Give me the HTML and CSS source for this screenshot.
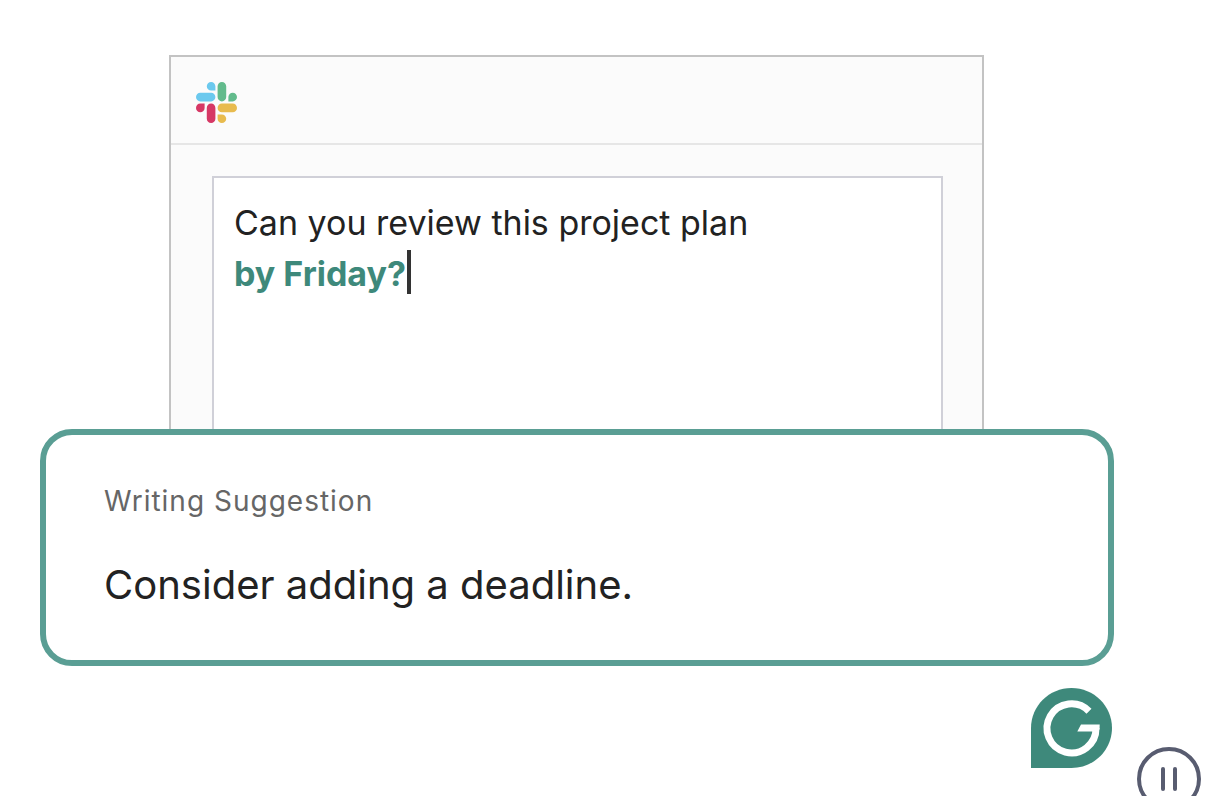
FILE: index.html
```
<!DOCTYPE html>
<html lang="en">
<head>
    <meta charset="utf-8">
    <meta name="viewport" content="width=device-width, initial-scale=1">
    <title>Writing Suggestion</title>
    <link rel="stylesheet" href="styles.css">
</head>

<body>
    <main class="demo">
        <section class="window">
            <header class="window-header">
                <svg class="slack-logo" viewBox="0 0 122.8 122.8" role="img" aria-label="Slack">
                    <path fill="#d63865" d="M25.8 77.6c0 7.1-5.8 12.9-12.9 12.9S0 84.7 0 77.6s5.8-12.9 12.9-12.9h12.9v12.9zm6.5 0c0-7.1 5.8-12.9 12.9-12.9s12.9 5.8 12.9 12.9v32.3c0 7.1-5.8 12.9-12.9 12.9s-12.9-5.8-12.9-12.9V77.6z"/>
                    <path fill="#6bc9ee" d="M45.2 25.8c-7.1 0-12.9-5.8-12.9-12.9S38.1 0 45.2 0s12.9 5.8 12.9 12.9v12.9H45.2zm0 6.5c7.1 0 12.9 5.8 12.9 12.9s-5.8 12.9-12.9 12.9H12.9C5.8 58.1 0 52.3 0 45.2s5.8-12.9 12.9-12.9h32.3z"/>
                    <path fill="#62bb8c" d="M97 45.2c0-7.1 5.8-12.9 12.9-12.9s12.9 5.8 12.9 12.9-5.8 12.9-12.9 12.9H97V45.2zm-6.5 0c0 7.1-5.8 12.9-12.9 12.9s-12.9-5.8-12.9-12.9V12.9C64.7 5.8 70.5 0 77.6 0s12.9 5.8 12.9 12.9v32.3z"/>
                    <path fill="#e8bb4e" d="M77.6 97c7.1 0 12.9 5.8 12.9 12.9s-5.8 12.9-12.9 12.9-12.9-5.8-12.9-12.9V97h12.9zm0-6.5c-7.1 0-12.9-5.8-12.9-12.9s5.8-12.9 12.9-12.9h32.3c7.1 0 12.9 5.8 12.9 12.9s-5.8 12.9-12.9 12.9H77.6z"/>
                </svg>
            </header>
            <div class="window-body">
                <p class="message">
                    Can you review this project plan<br>
                    <strong class="insertion">by Friday?</strong><span class="caret"></span>
                </p>
            </div>
        </section>

        <section class="suggestion">
            <h2 class="suggestion-label">Writing Suggestion</h2>
            <p class="suggestion-text">Consider adding a deadline.</p>
        </section>

        <svg class="grammarly-logo" viewBox="0 0 81 80" role="img" aria-label="Grammarly">
            <path fill="#3e897b" d="M40.5 0C63 0 81 18 81 40S63 80 40.5 80H0V40C0 18 18 0 40.5 0z"/>
            <path fill="none" stroke="#fff" stroke-width="7" d="M58 23.2A24.5 24.5 0 1 0 65 40"/>
            <path fill="#fff" d="M50 36.500h18.700l-.2 5-7 2H46.300z"/>
        </svg>
    </main>

    <button class="pause" type="button" aria-label="Pause animation">
        <span class="pause-bar"></span>
        <span class="pause-bar"></span>
    </button>
</body>

</html>
```
FILE: styles.css
```
* { box-sizing: border-box; }
body, html {
    margin: 0;
    padding: 0;
    background: #fff;
    color: #222;
    font-family: Inter, "Liberation Sans", sans-serif;
}
h2, p { margin: 0; }
.demo {
    display: flex;
    flex-direction: column;
    padding: 55px 112px 28px 40px;
}

/* Window */
.window {
    margin: 0 130px 0 129px;
    background: #fbfbfb;
    border: 2px solid #c3c3c3;
    border-bottom: 0;
}
.window-header {
    padding: 25px 25px 20px;
    border-bottom: 2px solid #e6e6e6;
}
.slack-logo { display: block; width: 41px; height: 41px; }
.window-body { padding: 31px 39px 0 41px; }
.message {
    min-height: 253px;
    padding: 19px 20px;
    background: #fff;
    border: 2px solid #d0d0d8;
    border-bottom: 0;
    font-size: 34px;
    line-height: 51px;
}
.insertion { color: #3e897b; font-weight: 700; }
.caret {
    display: inline-block;
    width: 4px; height: 44px;
    margin-left: 1px;
    background: #333;
    vertical-align: -8px;
}

/* Suggestion card */
.suggestion {
    padding: 46px 58px 45px;
    background: #fff;
    border: 6px solid #5a9e94;
    border-radius: 32px;
}
.suggestion-label {
    color: #666;
    font-size: 28px;
    font-weight: 400;
    letter-spacing: 1px;
    line-height: 40px;
}
.suggestion-text {
    margin-top: 34px;
    font-size: 40px;
    line-height: 60px;
}
.grammarly-logo {
    align-self: flex-end;
    width: 81px; height: 80px;
    margin: 22px 2px 0 0;
}

/* Playback control, runs off the bottom edge */
.pause {
    position: fixed; right: 25px; bottom: -15px;
    display: flex;
    align-items: center;
    justify-content: center;
    gap: 8px;
    width: 64px; height: 64px;
    padding: 0;
    background: #fff;
    border: 4px solid #585c70;
    border-radius: 50%;
}
.pause-bar {
    width: 4px; height: 24px;
    background: #585c70;
    border-radius: 2px;
}
```
